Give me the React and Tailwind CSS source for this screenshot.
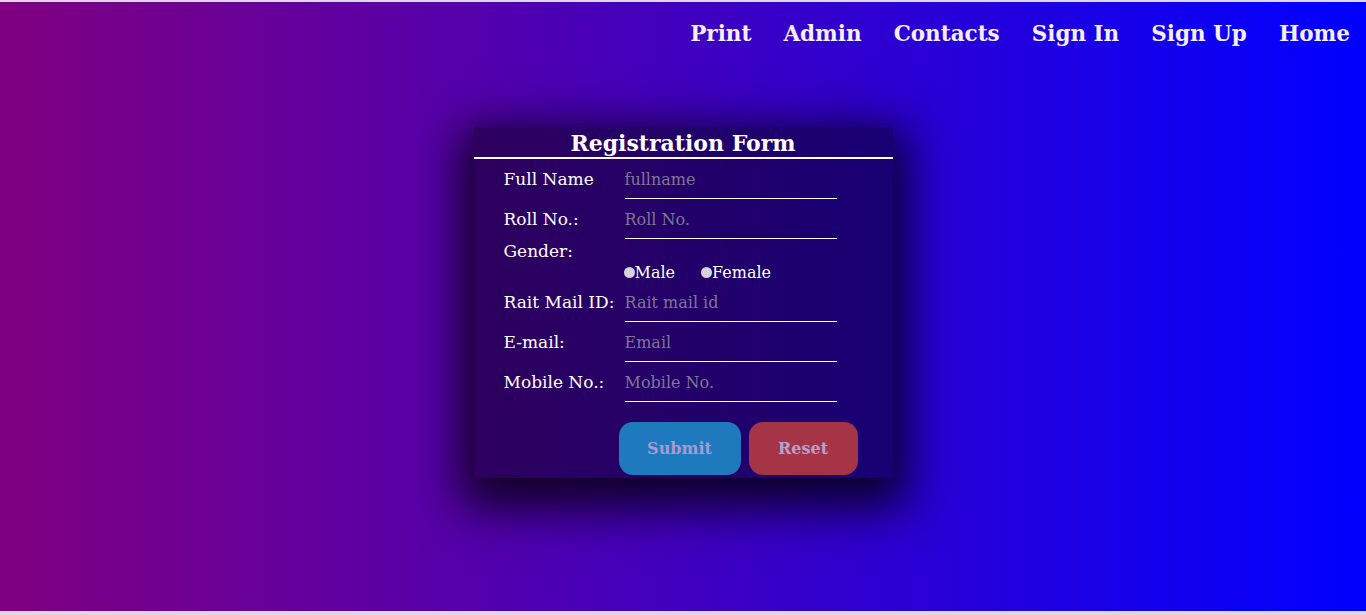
import { useState } from "react";

const NAV_LINKS = ["Print", "Admin", "Contacts", "Sign In", "Sign Up", "Home"];

const FIELDS = [
  { label: "Full Name", placeholder: "fullname" },
  { label: "Roll No.:", placeholder: "Roll No." },
];

const FIELDS_AFTER = [
  { label: "Rait Mail ID:", placeholder: "Rait mail id" },
  { label: "E-mail:", placeholder: "Email" },
  { label: "Mobile No.:", placeholder: "Mobile No." },
];

const slab = { fontFamily: "Rockwell, 'DejaVu Serif', 'Liberation Serif', serif" };

function Field({ label, placeholder }) {
  return (
    <div className="flex items-center">
      <label className="w-[121px] shrink-0 text-[17px] text-white">{label}</label>
      <input
        placeholder={placeholder}
        className="h-[39px] w-[212px] border-b-[1.5px] border-white bg-transparent pt-[1px] text-[16px] text-white outline-none placeholder:text-[#7f7794]"
        style={slab}
      />
    </div>
  );
}

export default function App() {
  const [gender, setGender] = useState("");

  return (
    <div
      className="flex h-[615px] flex-col border-t-2 border-b-4 border-[#dcd8e4] bg-[linear-gradient(to_right,#800080,#0000ff)]"
      style={slab}
    >
      {/* NAV */}
      <nav className="flex h-[62px] items-center justify-end gap-8 pt-[2px] pr-4">
        {NAV_LINKS.map((link) => (
          <a key={link} href="#" className="text-[21.5px] font-bold text-[#f4eefa]">
            {link}
          </a>
        ))}
      </nav>

      {/* FORM CARD */}
      <div className="mt-[63px] flex justify-center">
        <form className="w-[419px] bg-black/45 pb-[3px] shadow-[0_16px_45px_14px_rgba(0,0,0,0.8)]">
          <h2 className="h-[32px] border-b-2 border-white pt-[1px] text-center text-[22px] font-bold leading-[30px] text-white">
            Registration Form
          </h2>

          <div className="pl-[30px]">
            <div className="mt-[1px] flex flex-col gap-[1px]">
              {FIELDS.map((f) => (
                <Field key={f.label} {...f} />
              ))}
            </div>

            <div className="h-[44px]">
              <div className="h-[23px] pt-[1px] text-[17px] leading-[22px] text-white">Gender:</div>
              <div className="flex h-[21px] items-center gap-[26px] pl-[120px] text-[16px] text-white">
                <label className="flex items-center">
                  <input
                    type="radio"
                    name="gender"
                    checked={gender === "male"}
                    onChange={() => setGender("male")}
                    className="h-[11px] w-[11px] appearance-none rounded-full bg-[#d6d2dc]"
                  />
                  Male
                </label>
                <label className="flex items-center">
                  <input
                    type="radio"
                    name="gender"
                    checked={gender === "female"}
                    onChange={() => setGender("female")}
                    className="h-[11px] w-[11px] appearance-none rounded-full bg-[#d6d2dc]"
                  />
                  Female
                </label>
              </div>
            </div>

            <div className="flex flex-col gap-[1px]">
              {FIELDS_AFTER.map((f) => (
                <Field key={f.label} {...f} />
              ))}
            </div>

            <div className="mt-[20px] flex gap-2 pl-[115px]">
              <button
                type="submit"
                className="h-[53px] w-[122px] rounded-[14px] bg-[#1f79bd] text-[16px] font-bold text-[#a99ad2]"
                style={slab}
              >
                Submit
              </button>
              <button
                type="reset"
                className="h-[53px] w-[109px] rounded-[14px] bg-[#a53447] text-[16px] font-bold text-[#b3a3cf]"
                style={slab}
              >
                Reset
              </button>
            </div>
          </div>
        </form>
      </div>
    </div>
  );
}
